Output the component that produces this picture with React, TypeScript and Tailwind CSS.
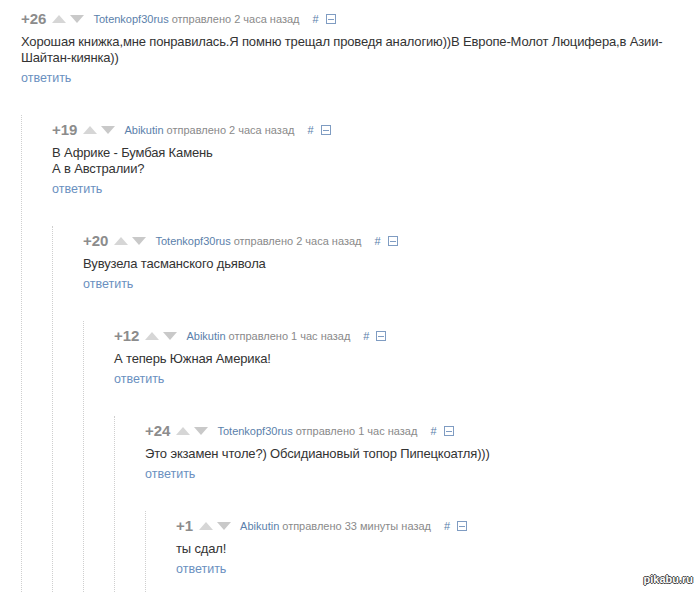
import { Fragment } from "react"

type Comment = {
  score: number
  author: string
  time: string
  lines: string[]
  reply?: Comment
}

const thread: Comment = {
  score: 26,
  author: "Totenkopf30rus",
  time: "2 часа назад",
  lines: [
    "Хорошая книжка,мне понравилась.Я помню трещал проведя аналогию))В Европе-Молот Люцифера,в Азии-Шайтан-киянка))",
  ],
  reply: {
    score: 19,
    author: "Abikutin",
    time: "2 часа назад",
    lines: ["В Африке - Бумбая Камень", "А в Австралии?"],
    reply: {
      score: 20,
      author: "Totenkopf30rus",
      time: "2 часа назад",
      lines: ["Вувузела тасманского дьявола"],
      reply: {
        score: 12,
        author: "Abikutin",
        time: "1 час назад",
        lines: ["А теперь Южная Америка!"],
        reply: {
          score: 24,
          author: "Totenkopf30rus",
          time: "1 час назад",
          lines: ["Это экзамен чтоле?) Обсидиановый топор Пипецкоатля)))"],
          reply: {
            score: 1,
            author: "Abikutin",
            time: "33 минуты назад",
            lines: ["ты сдал!"],
          },
        },
      },
    },
  },
}

function Arrows() {
  return (
    <span className="flex items-center gap-[4px] ml-[6px] mr-[9px]">
      <svg width="14" height="8" viewBox="0 0 14 8">
        <path d="M7 0 L14 8 L0 8 Z" fill="#d6d6d6" />
      </svg>
      <svg width="14" height="8" viewBox="0 0 14 8">
        <path d="M0 0 L14 0 L7 8 Z" fill="#c9c9c9" />
      </svg>
    </span>
  )
}

function CommentNode({ c }: { c: Comment }) {
  return (
    <div>
      <div className="flex items-center h-5 whitespace-nowrap">
        <span className="text-[15px] font-bold text-[#8c8c8c]">+{c.score}</span>
        <Arrows />
        <span className="text-[11px] text-[#5b7fab]">{c.author}</span>
        <span className="text-[11px] text-[#8a8a8a] ml-[3px]">отправлено {c.time}</span>
        <span className="text-[11px] text-[#5b7fab] ml-[13px]">#</span>
        <span className="ml-[7px] w-[10px] h-[10px] border border-[#7f9cc2] flex items-center justify-center">
          <span className="w-[6px] h-px bg-[#7f9cc2]" />
        </span>
      </div>
      <p className="mt-[5px] text-[13px] leading-[16px] tracking-[-0.15px] text-[#333]">
        {c.lines.map((l, i) => (
          <Fragment key={i}>
            {i > 0 && <br />}
            {l}
          </Fragment>
        ))}
      </p>
      <a className="block mt-[3px] text-[12.5px] leading-[18px] text-[#6a8fc0]">ответить</a>
      {c.reply ? (
        <div className="mt-[28px] border-l border-dotted border-[#cfcfcf] pl-[30px] pt-[5px]">
          <CommentNode c={c.reply} />
        </div>
      ) : (
        <div className="h-[40px]" />
      )}
    </div>
  )
}

export default function App() {
  return (
    <div
      className="relative w-[698px] h-[592px] overflow-hidden bg-white pl-[21px] pr-[8px] pt-[9px]"
      style={{ fontFamily: '"Liberation Sans", Arial, sans-serif' }}
    >
      <CommentNode c={thread} />
      <span
        className="absolute right-[5px] bottom-[5px] text-[11px] font-bold text-white"
        style={{ textShadow: "1px 0 #444, -1px 0 #444, 0 1px #444, 0 -1px #444" }}
      >
        pikabu.ru
      </span>
    </div>
  )
}
